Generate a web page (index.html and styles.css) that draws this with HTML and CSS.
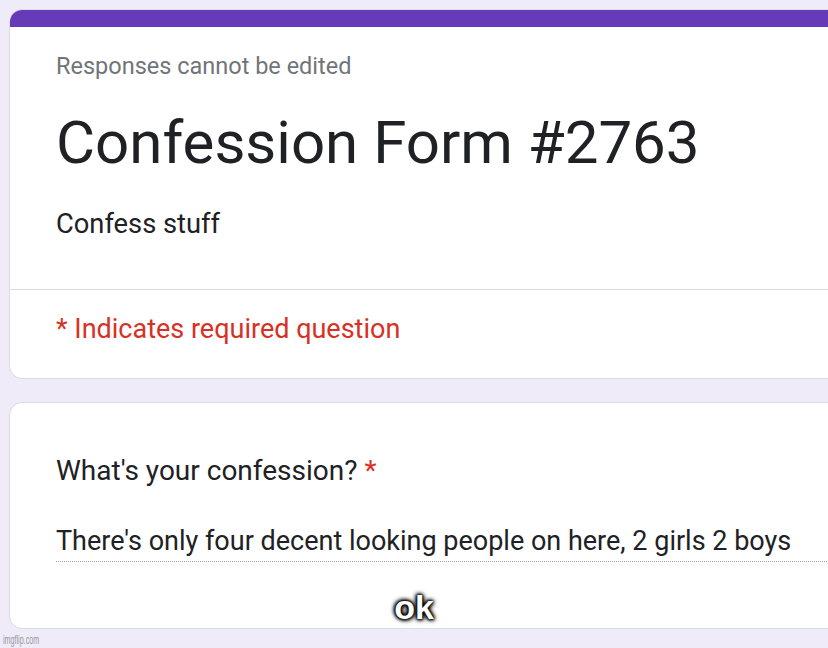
FILE: index.html
```html
<!DOCTYPE html>
<html lang="en">
<head>
    <meta charset="UTF-8">
    <title>Confession Form #2763</title>
    <link rel="stylesheet" href="styles.css">
</head>
<body>
    <div class="page">
        <div class="card card-head">
            <div class="accent"></div>
            <div class="head-top">
                <p class="notice">Responses cannot be edited</p>
                <h1 class="title">Confession Form #2763</h1>
                <p class="desc">Confess stuff</p>
            </div>
            <div class="head-bottom">
                <p class="required-note">* Indicates required question</p>
            </div>
        </div>

        <div class="card question">
            <p class="q-label">What's your confession? <span class="star">*</span></p>
            <div class="answer">There's only four decent looking people on here, 2 girls 2 boys</div>
        </div>
    </div>

    <div class="caption">ok</div>
    <div class="watermark">imgflip.com</div>
</body>
</html>
```

FILE: styles.css
```css
* {
    margin: 0;
    padding: 0;
    box-sizing: border-box;
}
body {
    font-family: Roboto, "Noto Sans", Arial, sans-serif;
    background-color: #f0ebf8;
    color: #202124;
    width: 828px;
    height: 648px;
    overflow: hidden;
    position: relative;
}
.page {
    padding: 9px 0 0 9px;
    width: 900px;
}
.card {
    background: white;
    border: 1px solid #dadce0;
    border-radius: 13px;
    overflow: hidden;
}
.accent {
    height: 17px;
    background-color: #673ab7;
}
.head-top {
    padding: 24px 46px 48px 46px;
    border-bottom: 1px solid #dadce0;
}
.notice {
    font-size: 23.5px;
    line-height: 30px;
    color: #70757a;
}
.title {
    font-size: 60px;
    font-weight: 400;
    line-height: 76px;
    margin-top: 24px;
}
.desc {
    font-size: 27.3px;
    line-height: 34px;
    margin-top: 26px;
}
.head-bottom {
    padding: 22px 46px 32px 46px;
}
.required-note {
    font-size: 27px;
    line-height: 34px;
    color: #d93025;
}
.question {
    margin-top: 23px;
    padding: 50px 0 66px 46px;
}
.q-label {
    font-size: 28px;
    line-height: 36px;
}
.star {
    color: #d93025;
}
.answer {
    margin-top: 35px;
    font-size: 27px;
    line-height: 34px;
    padding-bottom: 3px;
    border-bottom: 1px dotted #9e9e9e;
}
.caption {
    position: absolute;
    left: 0;
    right: 0;
    top: 588px;
    text-align: center;
    font-family: "Liberation Sans", Arial, sans-serif;
    font-weight: bold;
    font-size: 34px;
    color: white;
    text-shadow: 0 0 2px #000, 0 0 3px #000, 0 0 4px #000, 1px 1px 5px #000, -1px -1px 5px #000;
}
.watermark {
    position: absolute;
    left: 3px;
    bottom: 1px;
    font-family: "Liberation Sans", Arial, sans-serif;
    font-size: 13px;
    color: #999999;
    transform: scaleX(0.55);
    transform-origin: left;
}
```
